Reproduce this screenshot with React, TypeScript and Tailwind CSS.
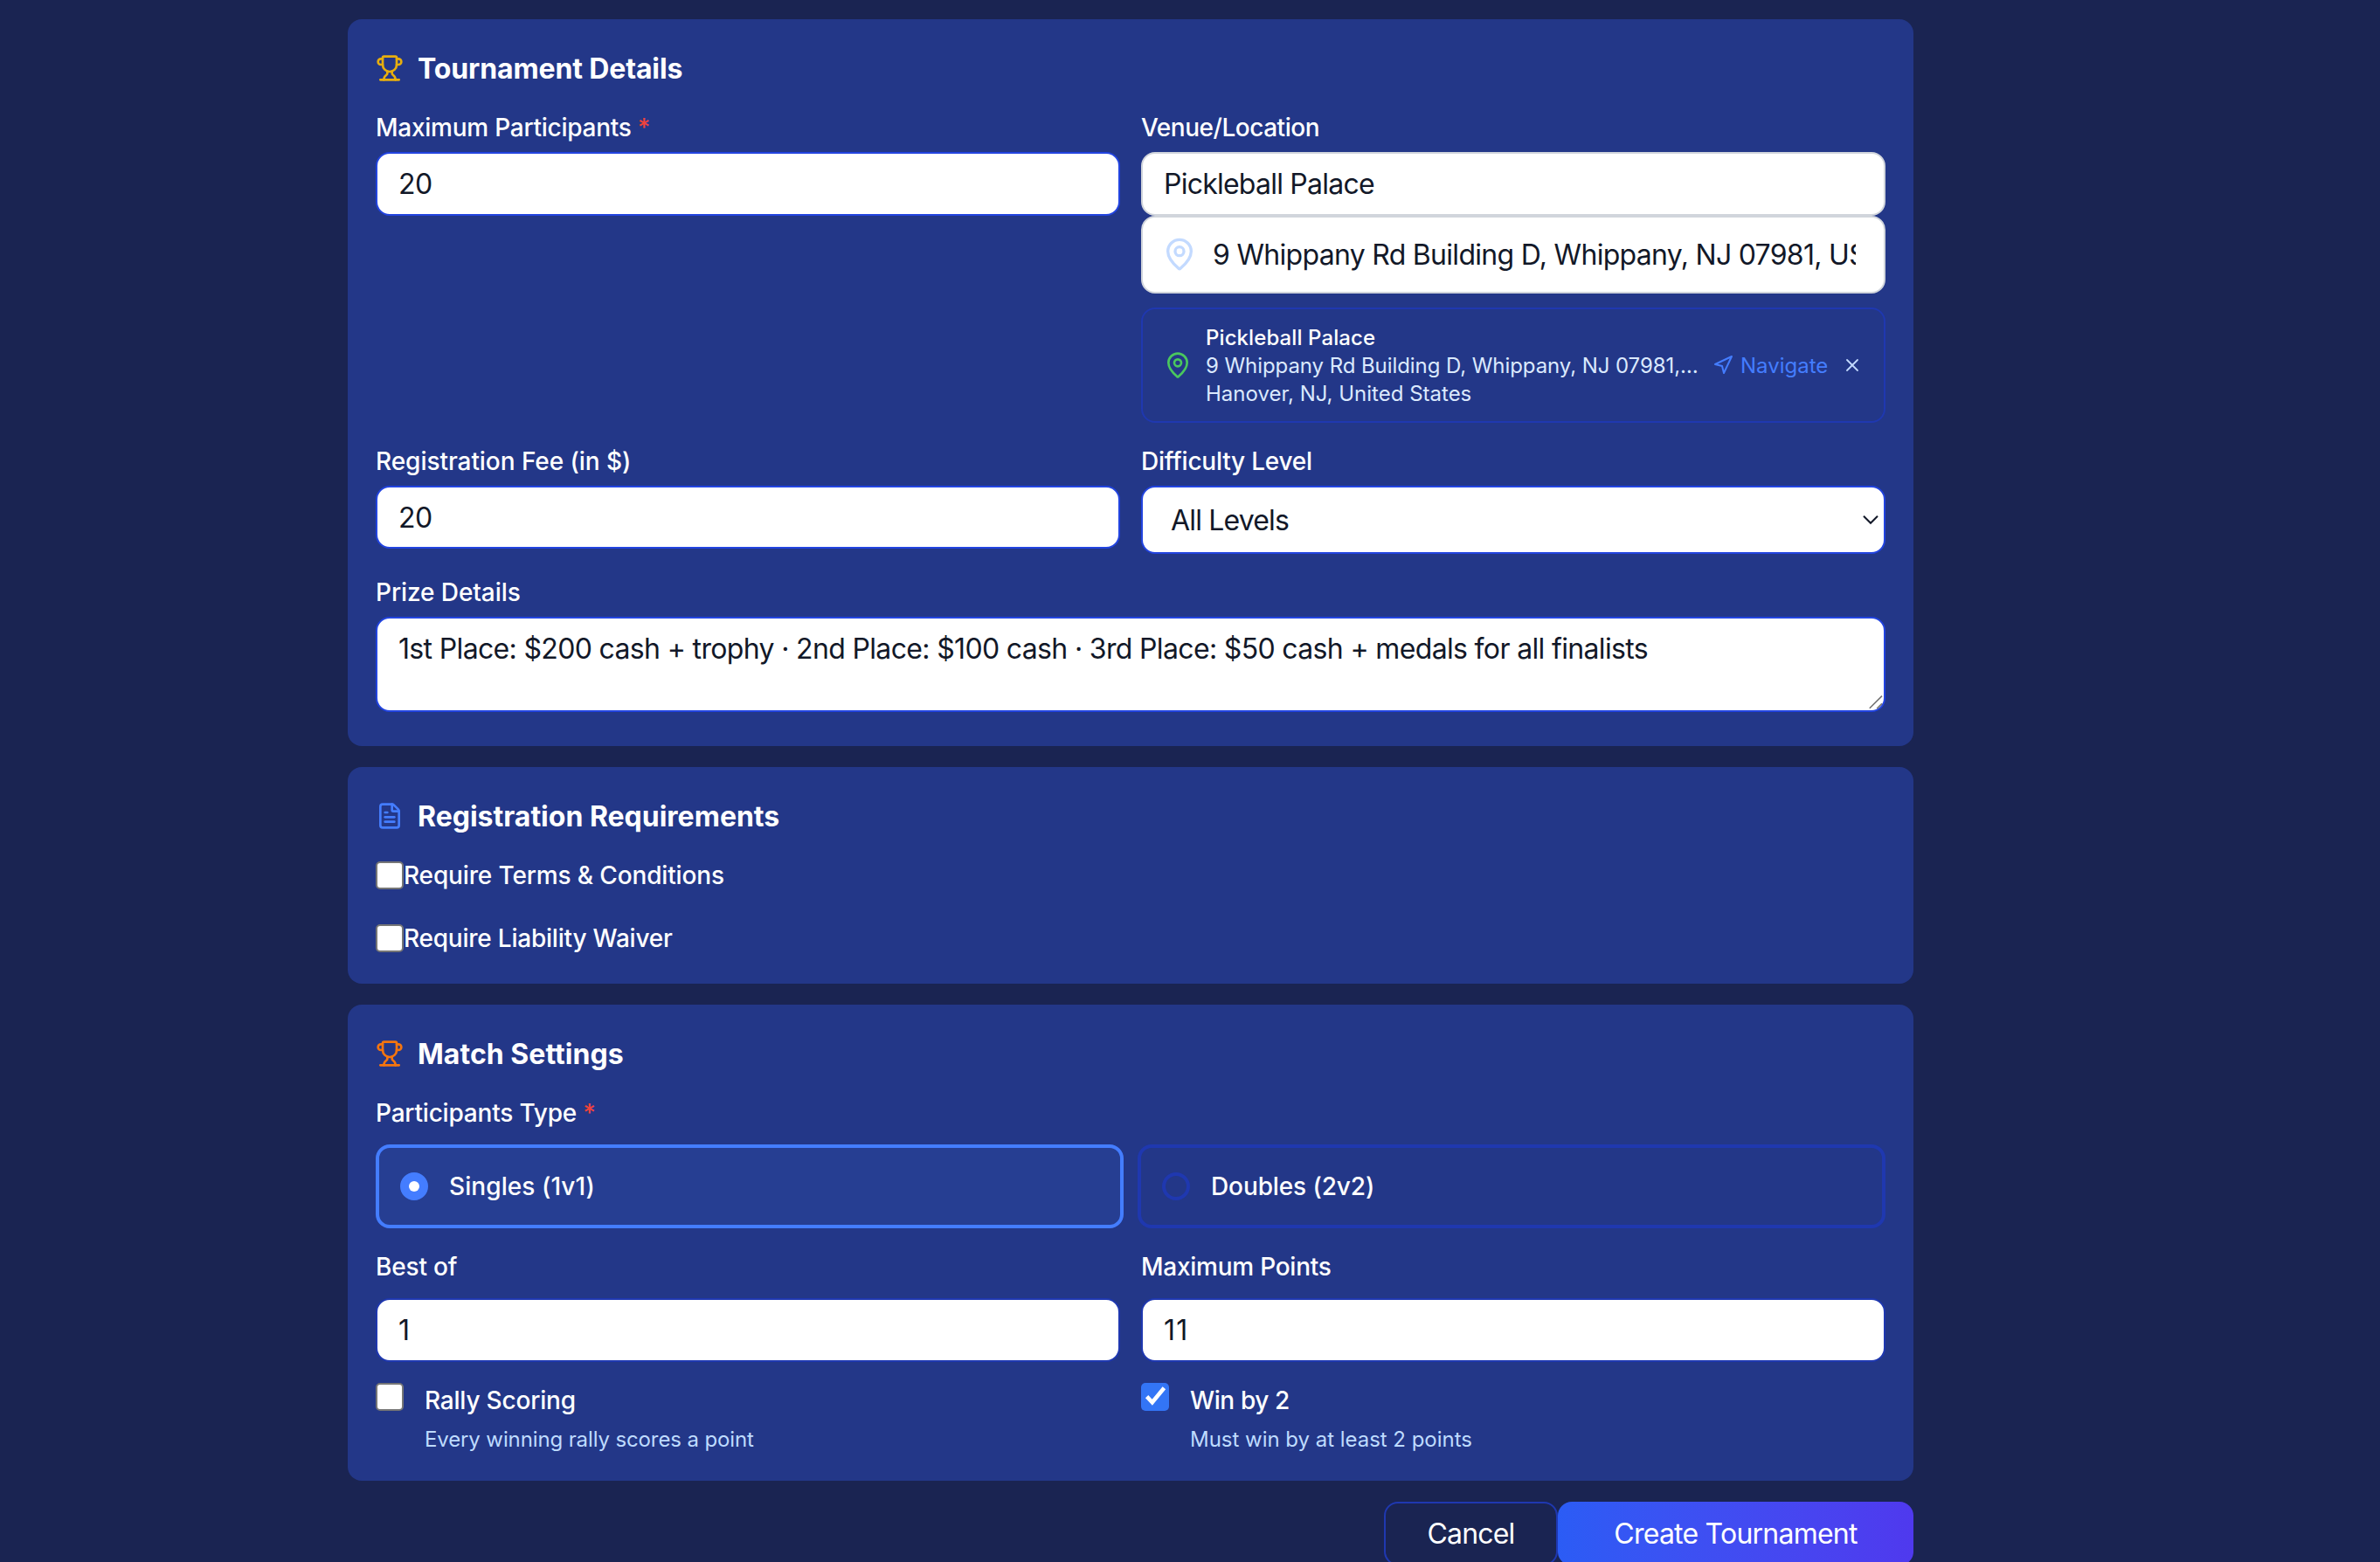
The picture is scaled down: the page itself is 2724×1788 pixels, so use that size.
import { useState } from "react";
import type { ReactNode } from "react";
import { clsx } from "clsx";
import { FileText, MapPin, Navigation, Trophy, X } from "lucide-react";

const PARTICIPANT_TYPES = [
    { value: "singles", label: "Singles (1v1)", tracking: "tracking-[0.003em]" },
    { value: "doubles", label: "Doubles (2v2)", tracking: "tracking-[-0.004em]" },
];

function Card({ children, className }: { children: ReactNode; className?: string }) {
    return <section className={clsx("rounded-2xl bg-[#233788] px-8 pt-8", className)}>{children}</section>;
}

function CardTitle({ icon, children, className }: { icon: ReactNode; children: ReactNode; className?: string }) {
    return (
        <h2 className={clsx("mb-6 flex h-12 items-center gap-4 text-[32px] font-bold leading-[46px] text-white", className)}>
            {icon}
            <span className="pt-0.5">{children}</span>
        </h2>
    );
}

function Label({ children, required, className }: { children: ReactNode; required?: boolean; className?: string }) {
    return (
        <label className={clsx("block h-10 whitespace-nowrap text-[28px] font-medium leading-10 text-white", className)}>
            {children}
            {required && <span className="text-[#f0433c]"> *</span>}
        </label>
    );
}

function Field({ value, className }: { value: string; className?: string }) {
    return (
        <input
            type="text"
            defaultValue={value}
            className={clsx(
                "block w-full rounded-2xl border-2 bg-white px-6 text-[32px] text-[#121828] outline-none",
                className
            )}
        />
    );
}

function Checkbox({ checked, onChange }: { checked: boolean; onChange: () => void }) {
    return (
        <button
            type="button"
            role="checkbox"
            aria-checked={checked}
            onClick={onChange}
            className={clsx(
                "flex size-8 shrink-0 items-center justify-center rounded-[5px]",
                checked ? "bg-[#3375f6]" : "border-2 border-[#767676] bg-white"
            )}
        >
            {checked && (
                <svg viewBox="0 0 32 32" className="size-8" fill="none" stroke="#ffffff" strokeWidth="4.6">
                    <path d="M6.6 15.6 12.8 22.2 26.4 5.8" />
                </svg>
            )}
        </button>
    );
}

export default function App() {
    const [type, setType] = useState("singles");
    const [terms, setTerms] = useState(false);
    const [waiver, setWaiver] = useState(false);
    const [rally, setRally] = useState(false);
    const [winByTwo, setWinByTwo] = useState(true);

    return (
        <div className="h-[1788px] w-full overflow-hidden bg-[#1a2452] pl-[398px] pt-[22px] font-['Inter',sans-serif]">
            <form className="flex w-[1792px] flex-col gap-6" onSubmit={(e) => e.preventDefault()}>
                {/* ── Tournament Details ── */}
                <Card className="h-[832px]">
                    <CardTitle icon={<Trophy size={32} color="#e7ae0e" />} className="tracking-[-0.004em]">
                        Tournament Details
                    </CardTitle>

                    <div className="grid grid-cols-2 gap-6">
                        <div>
                            <Label required className="tracking-[-0.009em]">Maximum Participants</Label>
                            <Field value="20" className="mt-2 h-[73px] border-[#2244e0] tracking-[-0.02em]" />
                        </div>

                        <div>
                            <Label className="tracking-[-0.017em]">Venue/Location</Label>
                            <Field value="Pickleball Palace" className="mt-2 h-[73px] border-[#d1d5dc] tracking-[-0.024em]" />
                            <div className="relative">
                                <MapPin size={40} color="#c3daff" className="absolute left-6 top-6" />
                                <Field
                                    value="9 Whippany Rd Building D, Whippany, NJ 07981, USA"
                                    className="h-[89px] border-[#d1d5dc] pl-20 pr-8 tracking-[-0.0219em]"
                                />
                            </div>

                            {/* Selected venue summary */}
                            <div className="mt-4 flex h-[132px] items-center rounded-2xl border-2 border-[#1f38b0] px-6 text-[24px] leading-8 text-[#dbe9fe]">
                                <MapPin size={32} color="#4ac75e" className="shrink-0" />
                                <div className="ml-4 w-[564px] whitespace-nowrap pt-0.5">
                                    <p className="font-medium tracking-[0.004em] text-white">Pickleball Palace</p>
                                    <p className="tracking-[-0.003em]">9 Whippany Rd Building D, Whippany, NJ 07981,…</p>
                                    <p>Hanover, NJ, United States</p>
                                </div>
                                <a className="ml-4 flex items-center gap-2 text-[#447dff]">
                                    <Navigation size={24} />
                                    <span className="pt-0.5">Navigate</span>
                                </a>
                                <button type="button" className="ml-auto shrink-0">
                                    <X size={24} strokeWidth={1.8} color="#c3daff" />
                                </button>
                            </div>
                        </div>

                        <div>
                            <Label className="tracking-[-0.002em]">Registration Fee (in $)</Label>
                            <Field value="20" className="mt-2 h-[72px] border-[#2244e0] tracking-[-0.02em]" />
                        </div>

                        <div>
                            <Label className="tracking-[-0.008em]">Difficulty Level</Label>
                            <div className="mt-2 flex h-[78px] items-center justify-between rounded-2xl border-2 border-[#2244e0] bg-white pl-8 pr-[6px] text-[32px] tracking-[-0.026em] text-[#121828]">
                                <span className="pt-0.5">All Levels</span>
                                <svg viewBox="0 0 18 12" className="h-3 w-[18px]" fill="none" stroke="#121828" strokeWidth="2">
                                    <path d="m1 1.8 8 8 8-8" />
                                </svg>
                            </div>
                        </div>
                    </div>

                    <Label className="mt-6 tracking-[-0.003em]">Prize Details</Label>
                    <div className="relative mt-2">
                        <textarea
                            defaultValue="1st Place: $200 cash + trophy · 2nd Place: $100 cash · 3rd Place: $50 cash + medals for all finalists"
                            className="block h-[109px] w-full resize-none rounded-2xl border-2 border-[#2244e0] bg-white px-6 pt-[11px] text-[32px] leading-[48px] tracking-[-0.0205em] text-[#121828] outline-none"
                        />
                        <svg viewBox="0 0 16 16" className="absolute bottom-[3px] right-[3px] size-4" fill="none" stroke="#757575" strokeWidth="1.6">
                            <path d="M.8 14.8 15 .6M9.2 15 15 9.4" />
                        </svg>
                    </div>
                </Card>

                {/* ── Registration Requirements ── */}
                <Card className="h-[248px]">
                    <CardTitle icon={<FileText size={32} color="#447dff" />}>Registration Requirements</CardTitle>
                    <div className="flex flex-col gap-8">
                        <div className="flex h-10 items-start">
                            <div className="pt-1">
                                <Checkbox checked={terms} onChange={() => setTerms(!terms)} />
                            </div>
                            <Label className="tracking-[-0.005em]">Require Terms &amp; Conditions</Label>
                        </div>
                        <div className="flex h-10 items-start">
                            <div className="pt-1">
                                <Checkbox checked={waiver} onChange={() => setWaiver(!waiver)} />
                            </div>
                            <Label className="tracking-[-0.008em]">Require Liability Waiver</Label>
                        </div>
                    </div>
                </Card>

                {/* ── Match Settings ── */}
                <Card className="h-[545px]">
                    <CardTitle icon={<Trophy size={32} color="#f5750f" />} className="tracking-[0.001em]">
                        Match Settings
                    </CardTitle>

                    <Label required className="tracking-[-0.007em]">Participants Type</Label>
                    <div className="mt-4 grid grid-cols-2 gap-4">
                        {PARTICIPANT_TYPES.map(({ value, label, tracking }) => {
                            const active = type === value;
                            return (
                                <button
                                    key={value}
                                    type="button"
                                    onClick={() => setType(value)}
                                    className={clsx(
                                        "flex h-24 items-center gap-6 rounded-2xl border-4 px-6",
                                        active ? "border-[#447dff] bg-[#263e92]" : "border-[#1f38b0]"
                                    )}
                                >
                                    <span
                                        className={clsx(
                                            "flex size-8 items-center justify-center rounded-full border-4",
                                            active ? "border-[#447dff] bg-[#447dff]" : "border-[#1f38b0]"
                                        )}
                                    >
                                        {active && <span className="size-3 shrink-0 rounded-full bg-white" />}
                                    </span>
                                    <span className={clsx("text-[28px] font-medium leading-10 text-white", tracking)}>{label}</span>
                                </button>
                            );
                        })}
                    </div>

                    <div className="mt-6 grid grid-cols-2 gap-6">
                        <div>
                            <Label className="tracking-[-0.006em]">Best of</Label>
                            <Field value="1" className="mt-4 h-[73px] border-[#1f38b0]" />
                        </div>
                        <div>
                            <Label className="tracking-[-0.009em]">Maximum Points</Label>
                            <Field value="11" className="mt-4 h-[73px] border-[#1f38b0] tracking-[0.04em]" />
                        </div>
                        <div className="flex items-start gap-6">
                            <Checkbox checked={rally} onChange={() => setRally(!rally)} />
                            <div>
                                <Label className="tracking-[-0.007em]">Rally Scoring</Label>
                                <p className="mt-[9px] text-[24px] leading-8 tracking-[-0.005em] text-[#bedbff]">
                                    Every winning rally scores a point
                                </p>
                            </div>
                        </div>
                        <div className="flex items-start gap-6">
                            <Checkbox checked={winByTwo} onChange={() => setWinByTwo(!winByTwo)} />
                            <div>
                                <Label className="tracking-[-0.014em]">Win by 2</Label>
                                <p className="mt-[9px] text-[24px] leading-8 tracking-[-0.001em] text-[#bedbff]">
                                    Must win by at least 2 points
                                </p>
                            </div>
                        </div>
                    </div>
                </Card>

                {/* ── Actions ── */}
                <div className="flex justify-end text-[32px] text-white">
                    <button type="button" className="h-[73px] w-[199px] rounded-2xl border-2 border-[#1f38b0] tracking-[-0.025em]">
                        Cancel
                    </button>
                    <button
                        type="submit"
                        className="h-[73px] w-[407px] rounded-2xl bg-linear-to-r from-[#2b5cf5] to-[#4f39ee] tracking-[-0.024em]"
                    >
                        Create Tournament
                    </button>
                </div>
            </form>
        </div>
    );
}
